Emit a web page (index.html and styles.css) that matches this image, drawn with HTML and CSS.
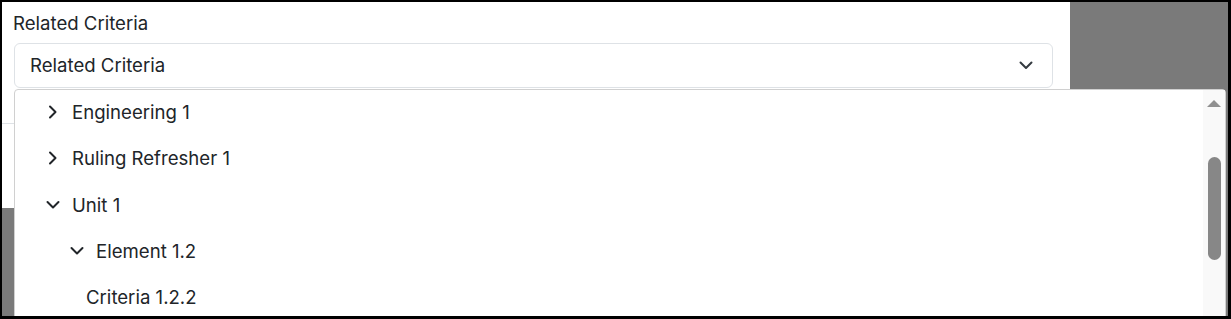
FILE: index.html
```html
<!DOCTYPE html>
<html lang="en">
<head>
<meta charset="utf-8">
<title>Related Criteria</title>
<link rel="stylesheet" href="styles.css">
</head>
<body>
<div class="frame">
  <div class="modal">
    <div class="field">
      <label class="field-label">Related Criteria</label>
      <div class="select">
        <span class="select-text">Related Criteria</span>
        <svg class="select-chevron" width="16" height="16" viewBox="0 0 16 16"><path d="M2.5 5.5l5.5 5.5 5.5-5.5" fill="none" stroke="#343a40" stroke-width="2" stroke-linecap="round" stroke-linejoin="round"/></svg>
      </div>
    </div>
    <div class="divider"></div>
  </div>
  <div class="dropdown">
    <ul class="tree">
      <li class="row lvl1">
        <svg class="chev" width="16" height="16" viewBox="0 0 16 16"><path d="M5 2.5l5.5 5.5-5.5 5.5" fill="none" stroke="#212529" stroke-width="2" stroke-linecap="round" stroke-linejoin="round"/></svg>
        <span>Engineering 1</span>
      </li>
      <li class="row lvl1">
        <svg class="chev" width="16" height="16" viewBox="0 0 16 16"><path d="M5 2.5l5.5 5.5-5.5 5.5" fill="none" stroke="#212529" stroke-width="2" stroke-linecap="round" stroke-linejoin="round"/></svg>
        <span>Ruling Refresher 1</span>
      </li>
      <li class="row lvl1">
        <svg class="chev" width="16" height="16" viewBox="0 0 16 16"><path d="M2.5 5l5.5 5.5 5.5-5.5" fill="none" stroke="#212529" stroke-width="2" stroke-linecap="round" stroke-linejoin="round"/></svg>
        <span>Unit 1</span>
      </li>
      <li class="row lvl2">
        <svg class="chev" width="16" height="16" viewBox="0 0 16 16"><path d="M2.5 5l5.5 5.5 5.5-5.5" fill="none" stroke="#212529" stroke-width="2" stroke-linecap="round" stroke-linejoin="round"/></svg>
        <span>Element 1.2</span>
      </li>
      <li class="row leaf">
        <span>Criteria 1.2.2</span>
      </li>
    </ul>
    <div class="scrollbar">
      <div class="scroll-up"></div>
      <div class="scroll-thumb"></div>
    </div>
  </div>
</div>
</body>
</html>
```

FILE: styles.css
```css
* { box-sizing: border-box; }

html, body {
  margin: 0;
  padding: 0;
  background: #000;
}

body {
  width: 1231px;
  height: 319px;
  overflow: hidden;
  font-family: Inter, "Noto Sans", "Liberation Sans", sans-serif;
  font-size: 18.6px;
  color: #212529;
}

.frame {
  position: relative;
  margin: 2px 3px 3px 2px;
  height: 314px;
  background: #7a7a7a;
  overflow: hidden;
}

.modal {
  width: 1068px;
  height: 206px;
  background: #fff;
}

.field {
  padding: 9px 17px 0 11px;
}

.field-label {
  display: block;
  height: 24px;
  line-height: 24px;
  color: #212529;
  margin-bottom: 8px;
}

.select {
  display: flex;
  align-items: center;
  justify-content: space-between;
  height: 45px;
  margin-left: 1px;
  border: 1px solid #dee2e6;
  border-radius: 6px;
  padding: 0 18px 1px 15px;
  background: #fff;
}

.select-text {
  line-height: 24px;
}

.divider {
  margin-top: 35px;
  border-top: 1px solid #dee2e6;
}

.dropdown {
  position: absolute;
  left: 12px;
  top: 87px;
  width: 1212px;
  height: 240px;
  background: #fff;
  border: 1px solid #d0d0d0;
  border-radius: 4px 4px 0 0;
  display: flex;
}

.tree {
  flex: 1;
  list-style: none;
  margin: -1px 0 0;
  padding: 0;
  overflow: hidden;
}

.row {
  display: flex;
  align-items: center;
  height: 46.25px;
  line-height: 24px;
  white-space: nowrap;
}

.chev {
  flex: none;
  margin-right: 11px;
}

.lvl1 { padding-left: 30px; }
.lvl2 { padding-left: 54px; }
.leaf { padding-left: 71px; }

.scrollbar {
  flex: none;
  width: 22px;
  background: #f9f9f9;
  display: flex;
  flex-direction: column;
  align-items: center;
}

.scroll-up {
  margin-top: 10px;
  width: 0;
  height: 0;
  border-left: 7px solid transparent;
  border-right: 7px solid transparent;
  border-bottom: 7px solid #909090;
}

.scroll-thumb {
  margin-top: 50px;
  margin-left: 1px;
  width: 13px;
  height: 103px;
  border-radius: 7px;
  background: #878787;
}
```
